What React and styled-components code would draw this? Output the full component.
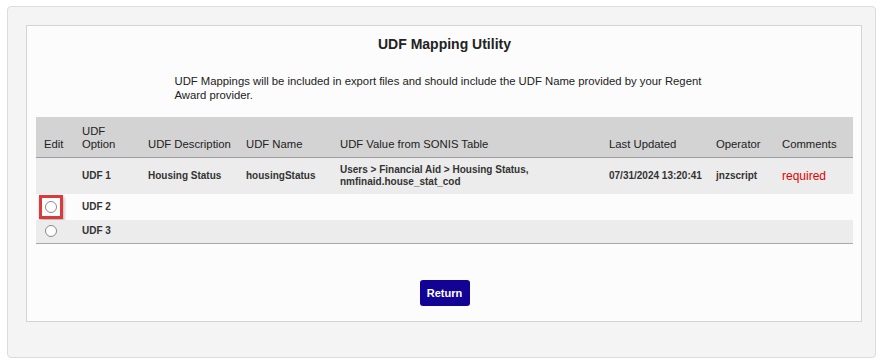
import React from 'react';
import styled, { createGlobalStyle } from 'styled-components';

const GlobalStyle = createGlobalStyle`
  body {
    margin: 0;
    background: #ffffff;
    font-family: "Liberation Sans", Arial, sans-serif;
    color: #222222;
  }
`;

const Page = styled.div`
  padding: 6px 12px 7px 7px;
`;

const OuterPanel = styled.div`
  width: 869px;
  box-sizing: border-box;
  background: #f4f4f4;
  border: 1px solid #dcdcdc;
  border-radius: 4px;
  padding: 18px 13px 35px 18px;
`;

const InnerPanel = styled.div`
  width: 836px;
  box-sizing: border-box;
  background: #fcfcfc;
  border: 1px solid #d4d4d4;
  padding: 10px 8px 15px 9px;
`;

const Title = styled.h1`
  margin: 0;
  text-align: center;
  font-size: 14px;
  font-weight: bold;
  line-height: 16px;
  color: #222222;
`;

const Intro = styled.p`
  width: 540px;
  margin: 22px auto 0;
  font-size: 11.3px;
  line-height: 14px;
  color: #222222;
`;

const Table = styled.table`
  width: 817px;
  margin-top: 15px;
  border-collapse: collapse;
  table-layout: fixed;
  border-bottom: 1px solid #a9a9a9;
`;

const HeadCell = styled.th`
  background: #d3d3d3;
  text-align: left;
  vertical-align: bottom;
  font-weight: normal;
  font-size: 11.3px;
  line-height: 13px;
  white-space: nowrap;
  padding: 8px 2px 6px 8px;
  border-bottom: 1px solid #9c9c9c;
  color: #222222;
`;

const Row = styled.tr`
  background: ${({ $shaded }) => ($shaded ? '#ececec' : '#fcfcfc')};
  height: ${({ $h }) => $h}px;
`;

const Cell = styled.td`
  padding: 0 2px 0 8px;
  vertical-align: middle;
  font-size: 10px;
  font-weight: bold;
  line-height: 12px;
  color: ${({ $tone }) => ($tone === 'red' ? '#e60000' : '#333333')};
  ${({ $tone }) => $tone === 'red' && 'font-size: 12px; font-weight: normal;'}
`;

const RadioWrap = styled.span`
  display: flex;
  align-items: center;
  justify-content: center;
  width: 24px;
  height: 24px;
  margin: -4px 0 -4px -5px;
  box-sizing: border-box;
  border: 3px solid ${({ $marked }) => ($marked ? '#d93a3a' : 'transparent')};
  box-shadow: ${({ $marked }) => ($marked ? '1px 2px 3px rgba(0,0,0,0.3)' : 'none')};
`;

const Radio = styled.span`
  display: block;
  width: 10px;
  height: 10px;
  border-radius: 50%;
  border: 1px solid #8a8a8a;
  background: #ffffff;
`;

const Footer = styled.div`
  display: flex;
  justify-content: center;
  margin-top: 36px;
`;

const Button = styled.button`
  background: #130394;
  color: #ffffff;
  border: none;
  border-radius: 3px;
  width: 50px;
  height: 26px;
  font-family: "Liberation Sans", Arial, sans-serif;
  font-weight: bold;
  font-size: 11px;
  cursor: pointer;
`;

const columns = [
  { label: 'Edit', w: 38 },
  { label: <>UDF<br />Option</>, w: 66 },
  { label: 'UDF Description', w: 98 },
  { label: 'UDF Name', w: 94 },
  { label: 'UDF Value from SONIS Table', w: 269 },
  { label: 'Last Updated', w: 107 },
  { label: 'Operator', w: 66 },
  { label: 'Comments', w: 79 },
];

export default function App() {
  return (
    <Page>
      <GlobalStyle />
      <OuterPanel>
        <InnerPanel>
          <Title>UDF Mapping Utility</Title>
          <Intro>
            UDF Mappings will be included in export files and should include the UDF Name provided by your Regent Award provider.
          </Intro>
          <Table>
            <colgroup>
              {columns.map((c, i) => (
                <col key={i} style={{ width: c.w }} />
              ))}
            </colgroup>
            <thead>
              <tr>
                {columns.map((c, i) => (
                  <HeadCell key={i}>{c.label}</HeadCell>
                ))}
              </tr>
            </thead>
            <tbody>
              <Row $shaded $h={36}>
                <Cell />
                <Cell>UDF 1</Cell>
                <Cell>Housing Status</Cell>
                <Cell>housingStatus</Cell>
                <Cell>
                  Users &gt; Financial Aid &gt; Housing Status,<br />nmfinaid.house_stat_cod
                </Cell>
                <Cell>07/31/2024 13:20:41</Cell>
                <Cell>jnzscript</Cell>
                <Cell $tone="red">required</Cell>
              </Row>
              <Row $h={26}>
                <Cell>
                  <RadioWrap $marked>
                    <Radio />
                  </RadioWrap>
                </Cell>
                <Cell>UDF 2</Cell>
                <Cell />
                <Cell />
                <Cell />
                <Cell />
                <Cell />
                <Cell />
              </Row>
              <Row $shaded $h={24}>
                <Cell>
                  <RadioWrap>
                    <Radio />
                  </RadioWrap>
                </Cell>
                <Cell>UDF 3</Cell>
                <Cell />
                <Cell />
                <Cell />
                <Cell />
                <Cell />
                <Cell />
              </Row>
            </tbody>
          </Table>
          <Footer>
            <Button>Return</Button>
          </Footer>
        </InnerPanel>
      </OuterPanel>
    </Page>
  );
}
